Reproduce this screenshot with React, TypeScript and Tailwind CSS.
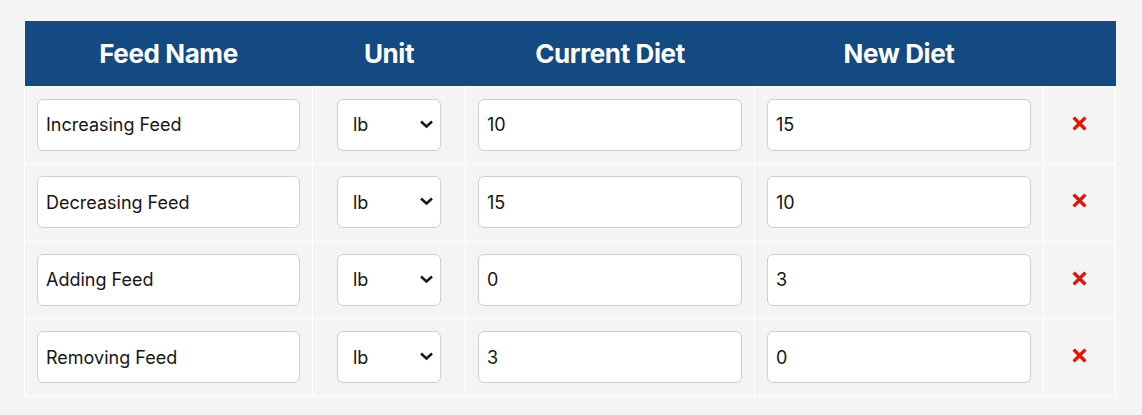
import { useState } from 'react';

type Row = {
  id: number;
  name: string;
  unit: string;
  current: string;
  next: string;
};

const initialRows: Row[] = [
  { id: 1, name: 'Increasing Feed', unit: 'lb', current: '10', next: '15' },
  { id: 2, name: 'Decreasing Feed', unit: 'lb', current: '15', next: '10' },
  { id: 3, name: 'Adding Feed', unit: 'lb', current: '0', next: '3' },
  { id: 4, name: 'Removing Feed', unit: 'lb', current: '3', next: '0' },
];

function RemoveIcon() {
  return (
    <svg width="15" height="15" viewBox="0 0 16 16" aria-hidden="true">
      <path d="M3 3 L13 13 M13 3 L3 13" stroke="#e1160b" strokeWidth="3.6" strokeLinecap="square" />
    </svg>
  );
}

export default function App() {
  const [rows, setRows] = useState<Row[]>(initialRows);

  const update = (id: number, key: keyof Row, value: string) => {
    setRows(rows.map((r) => (r.id === id ? { ...r, [key]: value } : r)));
  };

  const inputClass =
    'w-full h-[52px] px-2 bg-white border border-[#cfcfcf] rounded-md text-[18px] text-[#151515] outline-none';

  return (
    <div
      className="min-h-[415px] bg-[#f4f4f4] pt-[21px] px-6"
      style={{ fontFamily: 'Inter, "Noto Sans", sans-serif' }}
    >
      <table className="w-[1091px] border-collapse table-fixed">
        <colgroup>
          <col className="w-[288px]" />
          <col className="w-[153px]" />
          <col className="w-[289px]" />
          <col className="w-[289px]" />
          <col className="w-[72px]" />
        </colgroup>
        <thead>
          <tr className="bg-[#134a82] text-white h-[65px]">
            <th className="text-[26px] font-bold tracking-[-0.4px]">Feed Name</th>
            <th className="text-[26px] font-bold tracking-[-0.4px]">Unit</th>
            <th className="text-[26px] font-bold tracking-[-0.4px]">Current Diet</th>
            <th className="text-[26px] font-bold tracking-[-0.4px]">New Diet</th>
            <th></th>
          </tr>
        </thead>
        <tbody>
          {rows.map((row) => (
            <tr key={row.id} className="h-[77.5px]">
              <td className="border border-white px-3">
                <input
                  className={inputClass}
                  value={row.name}
                  onChange={(e) => update(row.id, 'name', e.target.value)}
                />
              </td>
              <td className="border border-white px-3">
                <div className="relative w-[104px] mx-auto">
                  <select
                    className="appearance-none w-full h-[52px] pl-[15px] bg-white border border-[#cfcfcf] rounded-md text-[18px] text-[#151515] outline-none"
                    value={row.unit}
                    onChange={(e) => update(row.id, 'unit', e.target.value)}
                  >
                    <option value="lb">lb</option>
                    <option value="kg">kg</option>
                  </select>
                  <svg
                    className="absolute right-[7px] top-[20px] pointer-events-none"
                    width="15"
                    height="10"
                    viewBox="0 0 15 10"
                  >
                    <path d="M2 2.5 L7.5 7.5 L13 2.5" fill="none" stroke="#16162a" strokeWidth="2.5" />
                  </svg>
                </div>
              </td>
              <td className="border border-white px-3">
                <input
                  className={inputClass}
                  value={row.current}
                  onChange={(e) => update(row.id, 'current', e.target.value)}
                />
              </td>
              <td className="border border-white px-3">
                <input
                  className={inputClass}
                  value={row.next}
                  onChange={(e) => update(row.id, 'next', e.target.value)}
                />
              </td>
              <td className="border border-white text-center">
                <button
                  className="inline-flex items-center justify-center"
                  onClick={() => setRows(rows.filter((r) => r.id !== row.id))}
                >
                  <RemoveIcon />
                </button>
              </td>
            </tr>
          ))}
        </tbody>
      </table>
    </div>
  );
}
